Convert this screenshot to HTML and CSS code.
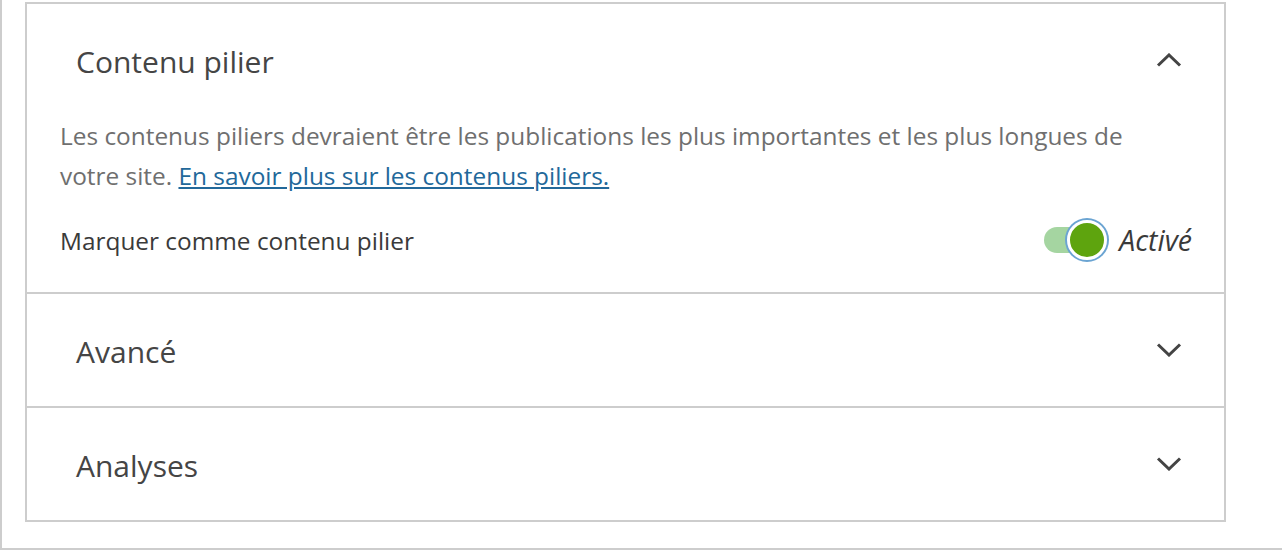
FILE: index.html
```html
<!DOCTYPE html>
<html lang="fr">
<head>
<meta charset="utf-8">
<title>Contenu pilier</title>
<link rel="stylesheet" href="styles.css">
</head>
<body>
<div class="outer">
  <div class="panel">
    <section class="section">
      <div class="header">
        <h2 class="title">Contenu pilier</h2>
        <svg class="chev" width="26" height="14" viewBox="0 0 26 14"><path d="M2 12.5 L13 2 L24 12.5" fill="none" stroke="#444" stroke-width="3"/></svg>
      </div>
      <div class="content">
        <p class="desc">Les contenus piliers devraient être les publications les plus importantes et les plus longues de votre site. <a href="#" class="link">En savoir plus sur les contenus piliers.</a></p>
        <div class="row">
          <span class="label">Marquer comme contenu pilier</span>
          <div class="switch">
            <div class="toggle"><span class="track"></span><span class="knob"></span></div>
            <span class="state">Activé</span>
          </div>
        </div>
      </div>
    </section>
    <section class="section">
      <div class="header">
        <h2 class="title">Avancé</h2>
        <svg class="chev" width="26" height="14" viewBox="0 0 26 14"><path d="M2 1.5 L13 12 L24 1.5" fill="none" stroke="#444" stroke-width="3"/></svg>
      </div>
    </section>
    <section class="section">
      <div class="header">
        <h2 class="title">Analyses</h2>
        <svg class="chev" width="26" height="14" viewBox="0 0 26 14"><path d="M2 1.5 L13 12 L24 1.5" fill="none" stroke="#444" stroke-width="3"/></svg>
      </div>
    </section>
  </div>
</div>
</body>
</html>
```

FILE: styles.css
```css
html, body {
  margin: 0;
  padding: 0;
  background: #fff;
}
body {
  font-family: "Open Sans", "Noto Sans", sans-serif;
  color: #444;
  overflow: hidden;
}
.outer {
  border-left: 2px solid #cdcdcd;
  border-bottom: 2px solid #cdcdcd;
  padding: 2px 0 26px 23px;
}
.panel {
  width: 1201px;
  box-sizing: border-box;
  border: 2px solid #cdcdcd;
  background: #fff;
}
.section + .section {
  border-top: 2px solid #cdcdcd;
}
.header {
  height: 112px;
  display: flex;
  align-items: center;
  justify-content: space-between;
  padding: 0 42px 0 49px;
}
.title {
  margin: 0;
  font-size: 30px;
  font-weight: 400;
  color: #454545;
  padding-top: 2px;
}
.chev {
  display: block;
}
.content {
  padding: 0 32px 30px 33px;
}
.desc {
  margin: 0;
  max-width: 1100px;
  font-size: 24.4px;
  line-height: 40px;
  color: #6f6f6f;
}
.link {
  color: #22689a;
  text-decoration: underline;
}
.row {
  margin-top: 22px;
  height: 44px;
  display: flex;
  align-items: center;
  justify-content: space-between;
}
.label {
  font-size: 24.4px;
  color: #3a3a3a;
}
.switch {
  display: flex;
  align-items: center;
  gap: 11px;
}
.toggle {
  position: relative;
  width: 64px;
  height: 42px;
}
.track {
  position: absolute;
  left: 0;
  top: 8px;
  width: 50px;
  height: 26px;
  border-radius: 13px;
  background: #a5d5a1;
}
.knob {
  position: absolute;
  right: 1px;
  top: 1px;
  width: 34px;
  height: 34px;
  border: 3px solid #fff;
  border-radius: 50%;
  background: #5ea40e;
  box-shadow: 0 0 0 2px #6ba4d2;
}
.state {
  font-size: 28.5px;
  font-style: italic;
  color: #3a3a3a;
}
```
